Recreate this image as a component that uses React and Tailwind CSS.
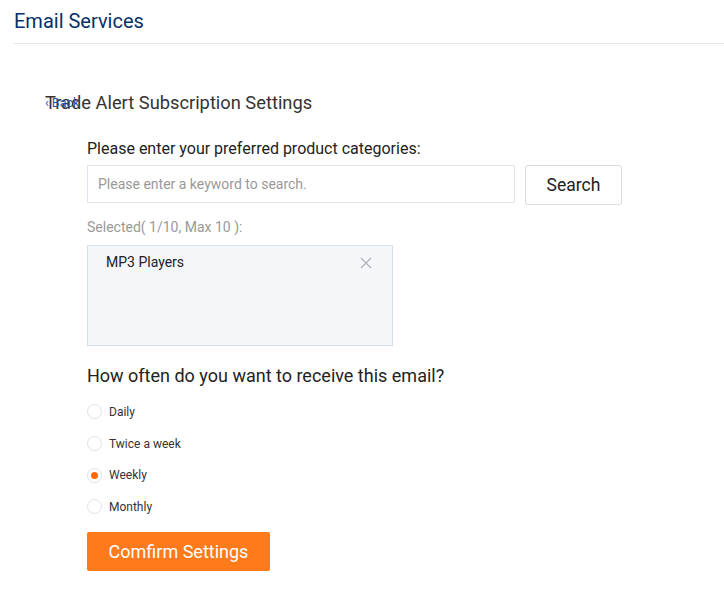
import React, { useState } from 'react'

const options = ['Daily', 'Twice a week', 'Weekly', 'Monthly']

const App = () => {
  const [freq, setFreq] = useState('Weekly')
  const [keyword, setKeyword] = useState('')

  return (
    <div className="min-h-[600px] bg-white" style={{ fontFamily: 'Roboto, "Liberation Sans", sans-serif' }}>
      <div className="ml-[14px] h-[44px] border-b border-[#e1e5ea]">
        <h1 className="text-[20px] leading-[42px] text-[#07306a]">Email Services</h1>
      </div>

      <div className="relative mt-[47px] pl-[45px]">
        <h2 className="text-[18.3px] leading-[24px] text-[#333]">Trade Alert Subscription Settings</h2>
        <a href="#" className="absolute left-[45px] top-[4px] text-[12.5px] leading-[16px] text-[#1f55b5]">‹ Back</a>
      </div>

      <div className="pl-[87px]">
        <p className="mt-[24px] text-[16px] leading-[20px] text-[#222]">Please enter your preferred product categories:</p>
        <div className="mt-[6px] flex items-start gap-[10px]">
          <input
            value={keyword}
            onChange={(e) => setKeyword(e.target.value)}
            placeholder="Please enter a keyword to search."
            className="h-[38px] w-[428px] border border-[#dfe3ea] px-[10px] text-[14px] text-[#333] outline-none placeholder:text-[#999]"
          />
          <button type="button" className="h-[40px] w-[97px] rounded-[3px] border border-[#d6dbe3] bg-white text-[17.5px] text-[#222]">
            Search
          </button>
        </div>

        <p className="mt-[13px] text-[14px] leading-[18px] text-[#999]">Selected( 1/10, Max 10 ):</p>
        <div className="mt-[9px] h-[101px] w-[306px] border border-[#d9dfe8] bg-[#f4f6fa] pl-[18px] pr-[20px] pt-[6px]">
          <div className="flex items-center justify-between">
            <span className="text-[14px] leading-[20px] text-[#222]">MP3 Players</span>
            <svg width="12" height="12" viewBox="0 0 12 12" className="mt-[1px]">
              <path d="M1 1L11 11M11 1L1 11" stroke="#a9afb8" strokeWidth="1.1" />
            </svg>
          </div>
        </div>

        <h3 className="mt-[18px] text-[18px] leading-[24px] text-[#222]">How often do you want to receive this email?</h3>
        <div className="mt-[8px]">
          {options.map((o) => (
            <label key={o} className="flex h-[31.7px] cursor-pointer items-center gap-[7px]" onClick={() => setFreq(o)}>
              <span className="flex h-[15px] w-[15px] items-center justify-center rounded-full border border-[#dde1e8] bg-white">
                {freq === o && <span className="h-[7px] w-[7px] rounded-full bg-[#ff6a00]" />}
              </span>
              <span className="text-[12px] text-[#333]">{o}</span>
            </label>
          ))}
        </div>

        <button type="button" className="mt-[9px] h-[39px] w-[183px] rounded-[2px] bg-[#ff7a1a] text-[18px] text-white">
          Comfirm Settings
        </button>
      </div>
    </div>
  )
}

export default App
